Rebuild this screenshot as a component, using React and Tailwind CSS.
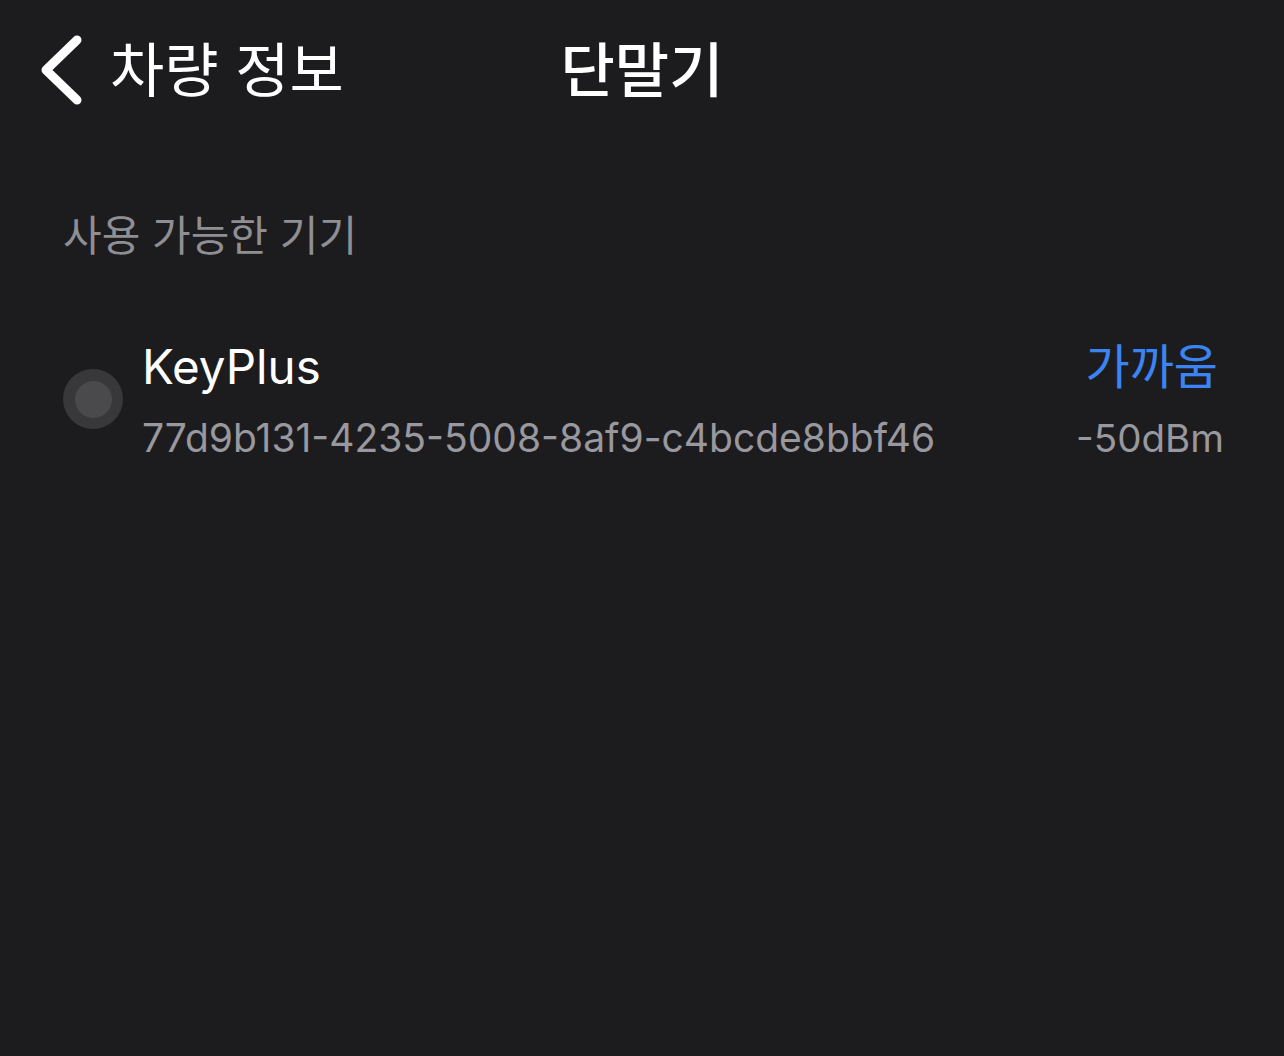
const font = { fontFamily: 'Inter, "Noto Sans CJK KR", sans-serif' }

const BackIcon = () => (
  <svg width="44" height="72" viewBox="0 0 44 72" fill="none">
    <polyline points="37,6 6,36 37,66" stroke="#ffffff" strokeWidth="9" strokeLinecap="round" strokeLinejoin="round" />
  </svg>
)

const DeviceRow = ({ name, id, proximity, rssi }) => (
  <div className="flex items-center pl-[63px] pr-[60px] pt-[72px]">
    <div className="w-[60px] h-[60px] rounded-full bg-[#38383a] flex items-center justify-center shrink-0 mt-[-2px]">
      <div className="w-[37px] h-[37px] rounded-full bg-[#4a4a4c]" />
    </div>
    <div className="flex-1 ml-[19px] flex flex-col">
      <div className="flex items-end justify-between">
        <span className="text-[47.5px] leading-[62px] text-white">{name}</span>
        <span className="text-[48px] leading-[62px] text-[#3b84f5] mr-[6px]">{proximity}</span>
      </div>
      <div className="flex items-center justify-between mt-[14px]">
        <span className="text-[39px] leading-[52px] text-[#98989e]">{id}</span>
        <span className="text-[38.5px] leading-[52px] text-[#98989e]">{rssi}</span>
      </div>
    </div>
  </div>
)

export default function App() {
  return (
    <div className="w-[1284px] h-[1056px] bg-[#1c1c1e] overflow-hidden" style={font}>
      <div className="grid grid-cols-[1fr_auto_1fr] items-center h-[140px]">
        <div className="flex items-center pl-[40px]">
          <BackIcon />
          <span className="ml-[26px] text-[59px] leading-none text-white">차량 정보</span>
        </div>
        <div className="text-[59px] leading-none font-medium text-white">단말기</div>
        <div />
      </div>
      <div className="pl-[63px] pt-[68px] text-[42px] leading-[56px] text-[#8e8e93]">사용 가능한 기기</div>
      <DeviceRow
        name="KeyPlus"
        id="77d9b131-4235-5008-8af9-c4bcde8bbf46"
        proximity="가까움"
        rssi="-50dBm"
      />
    </div>
  )
}
